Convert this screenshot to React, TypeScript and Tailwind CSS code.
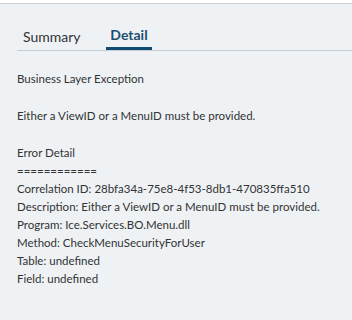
import React, { useState } from 'react';

const lines = [
  'Correlation ID: 28bfa34a-75e8-4f53-8db1-470835ffa510',
  'Description: Either a ViewID or a MenuID must be provided.',
  'Program: Ice.Services.BO.Menu.dll',
  'Method: CheckMenuSecurityForUser',
  'Table: undefined',
  'Field: undefined',
];

const App: React.FC = () => {
  const [tab, setTab] = useState<'summary' | 'detail'>('detail');

  return (
    <div
      className="w-[352px] h-[317px] bg-[#eef2f5] border-t border-[#c9ced3] mt-[3px] text-[#333]"
      style={{ fontFamily: 'Lato, "Liberation Sans", sans-serif' }}
    >
      {/* Tabs */}
      <div className="ml-[17px] mt-[19px] flex border-b border-[#c9ced3] h-[28px]">
        <button
          onClick={() => setTab('summary')}
          className={`w-[89px] text-left pl-[6px] text-[14px] leading-[20px] h-[27px] ${tab === 'summary' ? 'font-bold text-[#1b4f72] border-b-[3px] border-[#0f4c75]' : 'text-[#333]'}`}
        >
          Summary
        </button>
        <button
          onClick={() => setTab('detail')}
          className={`w-[46px] text-center text-[14px] leading-[20px] h-[27px] ${tab === 'detail' ? 'font-bold text-[#1b4f72] border-b-[3px] border-[#0f4c75]' : 'text-[#333]'}`}
        >
          Detail
        </button>
      </div>

      {/* Detail content */}
      <div className="pl-[17px] pt-[19px] text-[11.5px] leading-[18px] text-[#333]">
        <p>Business Layer Exception</p>
        <p className="mt-[19px]">Either a ViewID or a MenuID must be provided.</p>
        <p className="mt-[19px]">Error Detail</p>
        <p>============</p>
        {lines.map((l) => (
          <p key={l}>{l}</p>
        ))}
      </div>
    </div>
  );
};

export default App;
